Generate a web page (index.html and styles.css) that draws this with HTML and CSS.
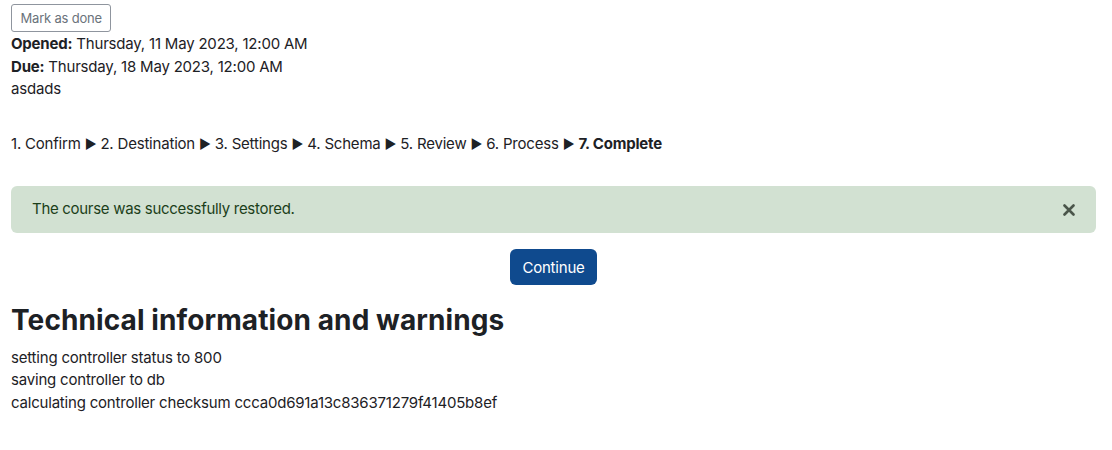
FILE: index.html
```html
<!DOCTYPE html>
<html lang="en">
<head>
<meta charset="utf-8">
<title>Restore course</title>
<link rel="stylesheet" href="styles.css">
</head>
<body>
<div class="page">
  <div class="completion">
    <button class="btn-outline" type="button">Mark as done</button>
  </div>
  <div class="dates">
    <div><strong>Opened:</strong> Thursday, 11 May 2023, 12:00 AM</div>
    <div><strong>Due:</strong> Thursday, 18 May 2023, 12:00 AM</div>
  </div>
  <div class="intro">asdads</div>

  <div class="steps">1. Confirm <span class="arrow">►</span> 2. Destination <span class="arrow">►</span> 3. Settings <span class="arrow">►</span> 4. Schema <span class="arrow">►</span> 5. Review <span class="arrow">►</span> 6. Process <span class="arrow">►</span> <strong>7. Complete</strong></div>

  <div class="alert">
    <span class="alert-text">The course was successfully restored.</span>
    <button class="close" type="button" aria-label="Dismiss">
      <svg width="12" height="12" viewBox="0 0 12 12"><path d="M1.5 1.5 L10.5 10.5 M10.5 1.5 L1.5 10.5" stroke="#4a554a" stroke-width="2.6" stroke-linecap="round"/></svg>
    </button>
  </div>

  <div class="continue-row">
    <button class="btn-primary" type="button">Continue</button>
  </div>

  <h2 class="heading">Technical information and warnings</h2>
  <div class="log">
    <div>setting controller status to 800</div>
    <div>saving controller to db</div>
    <div>calculating controller checksum ccca0d691a13c836371279f41405b8ef</div>
  </div>
</div>
</body>
</html>
```

FILE: styles.css
```css
html, body {
  margin: 0;
  padding: 0;
  background: #fff;
}
body {
  font-family: Inter, "Noto Sans", "Liberation Sans", sans-serif;
  font-size: 15px;
  line-height: 22.5px;
  letter-spacing: -0.2px;
  color: #1d2125;
}
.page {
  padding: 4px 16px 0 11px;
}
.completion {
  display: flex;
  margin-bottom: 1px;
}
.btn-outline {
  font-family: inherit;
  font-size: 13px;
  letter-spacing: -0.2px;
  color: #6a737b;
  background: #fff;
  border: 1px solid #8f959e;
  border-radius: 3px;
  height: 28px;
  padding: 0 8.5px;
  line-height: 26px;
}
.dates strong, .steps strong {
  font-weight: 700;
}
.steps {
  margin-top: 32px;
}
.arrow {
  font-size: 13px;
}
.alert {
  margin-top: 31px;
  display: flex;
  align-items: center;
  justify-content: space-between;
  background: #d2e1d2;
  color: #1c3f1a;
  border-radius: 6px;
  height: 47px;
  box-sizing: border-box;
  padding: 0 21px 0 21px;
}
.alert-text {
  letter-spacing: -0.3px;
}
.close {
  background: none;
  border: 0;
  padding: 0;
  display: flex;
  align-items: center;
  margin-top: 1px;
}
.continue-row {
  display: flex;
  justify-content: center;
  margin-top: 16px;
}
.btn-primary {
  font-family: inherit;
  font-size: 15px;
  letter-spacing: -0.2px;
  color: #fff;
  background: #0f4a8e;
  border: 0;
  border-radius: 6px;
  height: 36px;
  padding: 0 12.5px;
}
.heading {
  margin: 17px 0 8.5px;
  font-size: 28px;
  line-height: 36px;
  letter-spacing: 0.1px;
  font-weight: 700;
}
```
